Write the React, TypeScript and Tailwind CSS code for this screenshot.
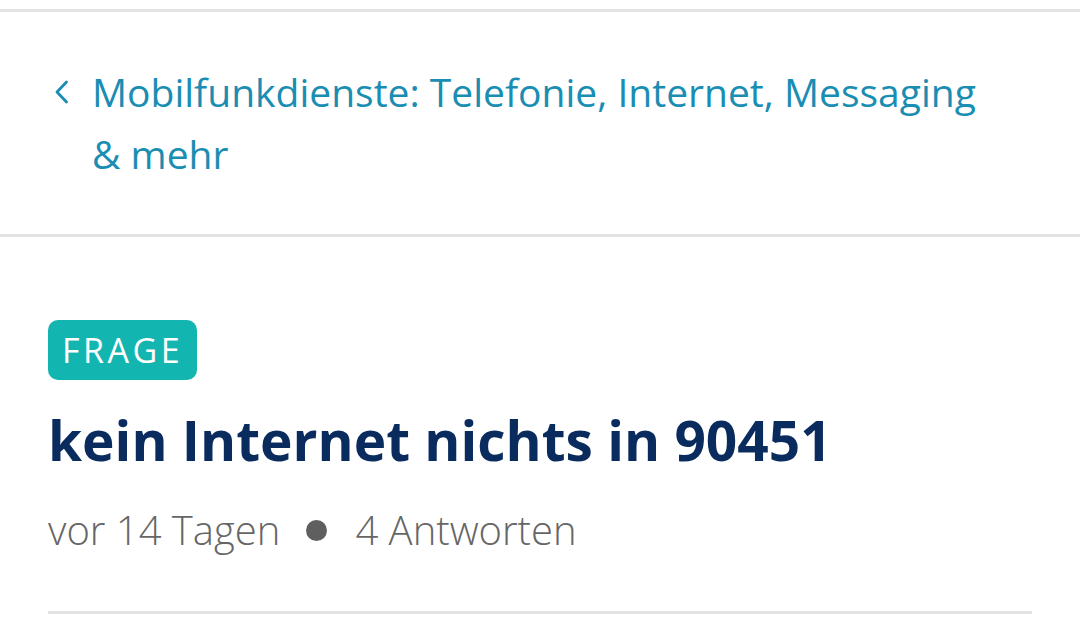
export default function App() {
  return (
    <div className="min-h-[618px] w-[1080px] bg-white" style={{ fontFamily: '"Open Sans", Lato, sans-serif' }}>
      <div className="pt-[9px]">
        <div className="h-[3px] bg-[#e3e3e3]" />
      </div>

      {/* Breadcrumb */}
      <div className="flex items-start pl-[54px] pr-[90px] pt-[49px] pb-[49px]">
        <svg className="mt-[19px] mr-[22px] h-[24px] w-[16px] shrink-0" viewBox="0 0 16 24" fill="none">
          <path d="M12.5 2 L3 12 L12.5 22" stroke="#1a8db3" strokeWidth="2.8" strokeLinecap="round" strokeLinejoin="round" />
        </svg>
        <a href="#" className="text-[39px] leading-[62px] text-[#1a8db3]">
          Mobilfunkdienste: Telefonie, Internet, Messaging &amp; mehr
        </a>
      </div>

      <div className="h-[3px] bg-[#e3e3e3]" />

      {/* Question */}
      <div className="px-[48px] pt-[83px]">
        <span className="inline-block rounded-[10px] bg-[#13b5b1] px-[14px] py-[7px] text-[34px] leading-[46px] tracking-[3.5px] text-white">
          FRAGE
        </span>
        <h1 className="mt-[26px] text-[55px] font-bold leading-[68px] text-[#0a2b5e]">
          kein Internet nichts in 90451
        </h1>
        <div className="mt-[32px] flex items-center text-[40px] font-light leading-[48px] text-[#666]">
          <span>vor 14 Tagen</span>
          <span className="ml-[26px] mr-[28px] h-[21px] w-[21px] rounded-full bg-[#5f5f5f]" />
          <span>4 Antworten</span>
        </div>
        <div className="mt-[57px] h-[3px] bg-[#e3e3e3]" />
      </div>
    </div>
  );
}
